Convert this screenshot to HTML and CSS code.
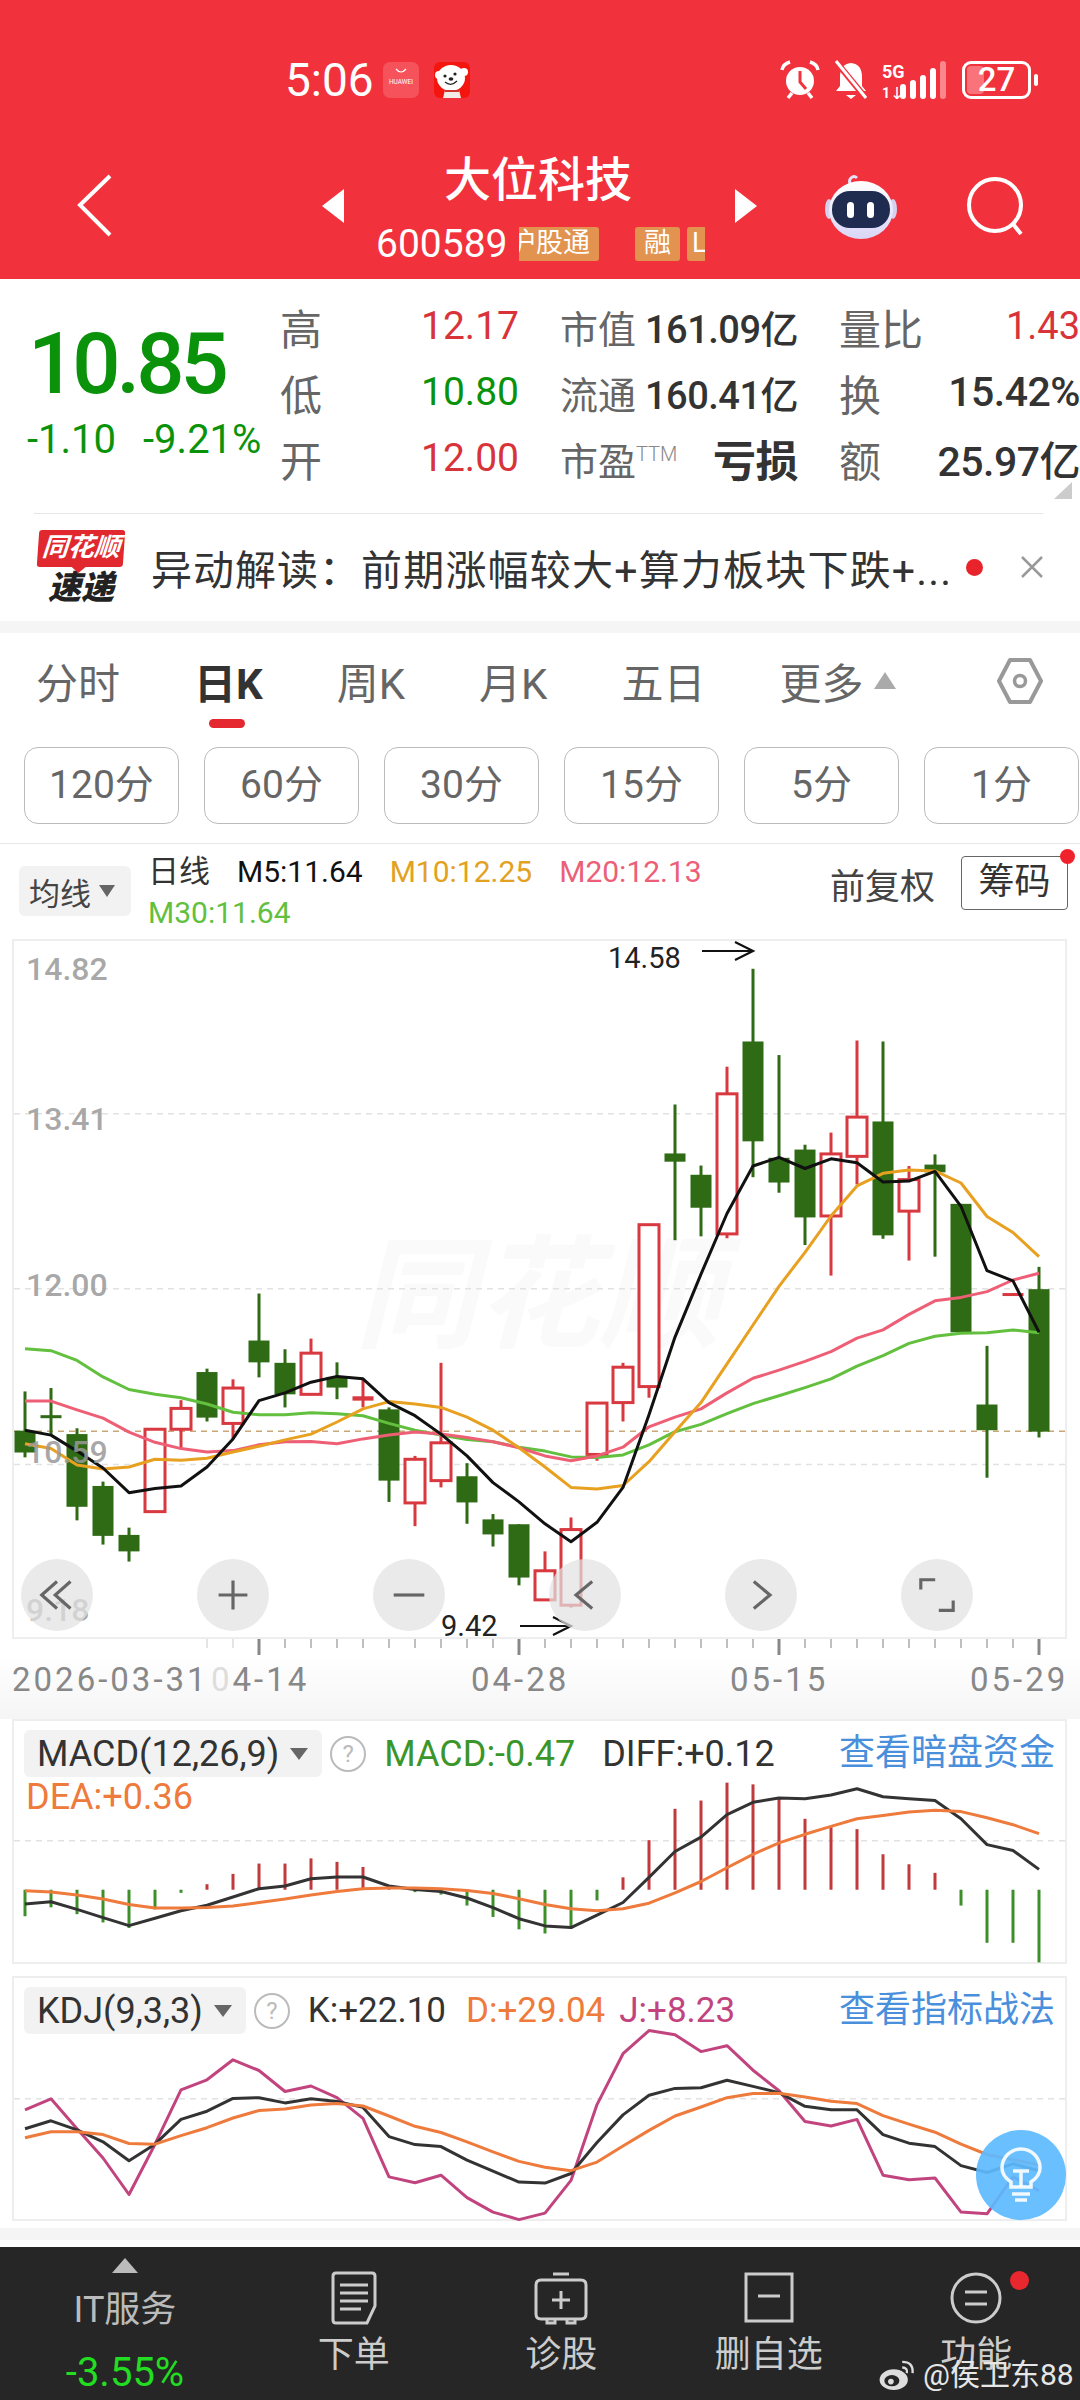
FILE: index.html
```html
<!DOCTYPE html>
<html lang="zh-CN">

<head>
    <meta charset="UTF-8">
    <title>大位科技</title>
    <link rel="stylesheet" href="styles.css">
</head>

<body>
    <header class="header">
        <div class="status">
            <span class="time">5:06</span>
            <svg class="app-huawei" viewBox="0 0 36 36">
                <rect width="36" height="36" rx="7" fill="#f5525b" />
                <path d="M13 7q5 6 10 0" fill="none" stroke="#fff" stroke-width="1.2" />
                <text x="18" y="22" class="huawei-text">HUAWEI</text>
            </svg>
            <svg class="app-bear" viewBox="0 0 36 36">
                <rect width="36" height="36" rx="6" fill="#f4150f" />
                <circle cx="5" cy="13" r="4" fill="#fff" />
                <circle cx="30" cy="10" r="4" fill="#fff" />
                <ellipse cx="17" cy="16" rx="14" ry="13" fill="#fff" />
                <path d="M11 28h14l2 8H9z" fill="#f3ece6" />
                <path d="M11 29h14" stroke="#d0342c" stroke-width="2" />
                <circle cx="11" cy="14" r="1.6" fill="#222" />
                <circle cx="21" cy="12" r="1.6" fill="#222" />
                <ellipse cx="17" cy="17" rx="2.4" ry="1.8" fill="#222" />
                <path d="M11 20q6 5 12 -1" fill="none" stroke="#222" stroke-width="1.2" />
            </svg>
            <div class="status-right">
                <svg class="st-alarm" viewBox="0 0 40 40">
                    <circle cx="20" cy="21" r="14" fill="#fff" />
                    <path d="M20 11v11l6 7" fill="none" stroke="#f1323c" stroke-width="3" />
                    <path d="M2 10q1-6 8-8M38 10q-1-6-8-8M8 38l4-5M32 38l-4-5" fill="none" stroke="#fff" stroke-width="3.5" />
                </svg>
                <svg class="st-bell" viewBox="0 0 36 40">
                    <path d="M18 3q11 1 11 14v9l4 5H3l4-5V17Q7 4 18 3z" fill="#fff" />
                    <path d="M13 35h10l-5 4z" fill="#fff" />
                    <path d="M4 3l28 34" stroke="#f1323c" stroke-width="6" />
                    <path d="M3 1l30 37" stroke="#fff" stroke-width="3" />
                </svg>
                <svg class="st-signal" viewBox="0 0 66 38">
                    <text x="1" y="17" class="net-text">5G</text>
                    <text x="1" y="37" class="net-small">1↓</text>
                    <path d="M22 35v-9M32 35v-13M42 35v-18M52 35v-25" stroke="#fff" stroke-width="6" stroke-linecap="round" />
                    <path d="M62 35V3" stroke="#f9878c" stroke-width="6" stroke-linecap="round" />
                </svg>
                <div class="battery">
                    <span class="battery-fill"></span>
                    <span class="battery-num">27</span>
                </div>
                <span class="battery-nub"></span>
            </div>
        </div>
        <nav class="nav">
            <svg class="back" viewBox="0 0 35 63">
                <path d="M33 2L3 31l30 30" fill="none" stroke="#fff" stroke-width="4" />
            </svg>
            <span class="arrow-left"></span>
            <div class="nav-mid">
                <div class="stock-name">大位科技</div>
                <div class="stock-code">
                    <span class="code">600589</span>
                    <span class="tag tag-hgt"><span>沪股通</span></span>
                    <span class="tag tag-rong">融</span>
                    <span class="tag tag-l">L</span>
                </div>
            </div>
            <span class="arrow-right"></span>
            <svg class="robot" viewBox="0 0 72 67">
                <defs>
                    <linearGradient id="helmet" x1="0" y1="0" x2="0" y2="1">
                        <stop offset="0" stop-color="#fff" />
                        <stop offset="1" stop-color="#d9d6f7" />
                    </linearGradient>
                </defs>
                <path d="M26 13q-3-4 0-7t6 0" fill="none" stroke="#e6e2fa" stroke-width="3" />
                <ellipse cx="4" cy="37" rx="4" ry="10" fill="#d5d2f0" />
                <ellipse cx="68" cy="37" rx="4" ry="10" fill="#d5d2f0" />
                <ellipse cx="36" cy="38" rx="32" ry="29" fill="url(#helmet)" />
                <rect x="7" y="19" width="58" height="37" rx="18" fill="#1f2c50" />
                <rect x="22" y="30" width="7" height="16" rx="3.5" fill="#fff" />
                <rect x="42" y="30" width="7" height="16" rx="3.5" fill="#fff" />
            </svg>
            <svg class="search" viewBox="0 0 60 58">
                <circle cx="28" cy="28" r="26" fill="none" stroke="#fff" stroke-width="4" />
                <path d="M46 47l8 10" stroke="#fff" stroke-width="4" />
            </svg>
        </nav>
    </header>

    <section class="quote">
        <div class="quote-left">
            <div class="price">10.85</div>
            <div class="change"><span>-1.10</span><span>-9.21%</span></div>
        </div>
        <div class="quote-grid">
            <div class="cell"><span class="label">高</span><span class="red">12.17</span></div>
            <div class="cell"><span class="label2">市值</span><span class="dark">161.09亿</span></div>
            <div class="cell"><span class="label">量比</span><span class="red small">1.43</span></div>
            <div class="cell"><span class="label">低</span><span class="green">10.80</span></div>
            <div class="cell"><span class="label2">流通</span><span class="dark">160.41亿</span></div>
            <div class="cell"><span class="label">换</span><span class="dark big">15.42%</span></div>
            <div class="cell"><span class="label">开</span><span class="red">12.00</span></div>
            <div class="cell"><span class="label2">市盈<sup class="ttm">TTM</sup></span><span class="dark bold">亏损</span></div>
            <div class="cell"><span class="label">额</span><span class="dark big">25.97亿</span></div>
        </div>
        <span class="corner"></span>
    </section>

    <section class="news">
        <div class="news-logo">
            <div class="logo-tag">同花顺</div>
            <div class="logo-sub">速递</div>
        </div>
        <div class="news-text">异动解读：<span class="news-body">前期涨幅较大+算力板块下跌+...</span></div>
        <span class="news-dot"></span>
        <svg class="news-close" viewBox="0 0 22 22">
            <path d="M1 1l20 20M21 1L1 21" stroke="#999" stroke-width="2.5" />
        </svg>
    </section>

    <div class="band"></div>

    <div class="tabs">
        <span class="tab">分时</span>
        <span class="tab active">日K</span>
        <span class="tab">周K</span>
        <span class="tab">月K</span>
        <span class="tab">五日</span>
        <span class="tab">更多</span>
        <span class="more-arrow"></span>
        <svg class="hex" viewBox="0 0 46 46">
            <path d="M13 2h20l11 21-11 21H13L2 23z" fill="none" stroke="#999" stroke-width="4" stroke-linejoin="round" />
            <circle cx="23" cy="23" r="5.5" fill="none" stroke="#999" stroke-width="3.5" />
        </svg>
    </div>

    <div class="periods">
        <span class="period">120分</span>
        <span class="period">60分</span>
        <span class="period">30分</span>
        <span class="period">15分</span>
        <span class="period">5分</span>
        <span class="period">1分</span>
    </div>

    <div class="legend">
        <div class="chip">均线<i class="caret"></i></div>
        <div class="series">
            <div class="series-row">
                <span class="series-name">日线</span>
                <span class="c-m5">M5:11.64</span>
                <span class="c-m10">M10:12.25</span>
                <span class="c-m20">M20:12.13</span>
            </div>
            <div class="series-row"><span class="c-m30">M30:11.64</span></div>
        </div>
        <div class="legend-right">
            <span class="fq">前复权</span>
            <span class="chouma">筹码<i class="chouma-dot"></i></span>
        </div>
    </div>

    <div class="panel panel-k">
        <svg id="kline" class="plot" viewBox="14 941 1051 696"></svg>
        <button class="cb cb1"><svg viewBox="0 0 40 40"><path d="M20 5L3 20l17 15M35 5L18 20l17 15" /></svg></button>
        <button class="cb cb2"><svg viewBox="0 0 40 40"><path d="M20 4v32M4 20h32" /></svg></button>
        <button class="cb cb3"><svg viewBox="0 0 40 40"><path d="M3 20h34" /></svg></button>
        <button class="cb cb4"><svg viewBox="0 0 40 40"><path d="M28 5L10 20l18 15" /></svg></button>
        <button class="cb cb5"><svg viewBox="0 0 40 40"><path d="M12 5l18 15-18 15" /></svg></button>
        <button class="cb cb6"><svg viewBox="0 0 40 40"><path d="M2 14V3h16M38 26v11H22" /></svg></button>
    </div>

    <div class="axis">
        <svg id="ticks" class="ticks" viewBox="0 0 1080 18"></svg>
        <div class="dates">
            <span class="d1">2026-03-31</span>
            <span class="d2"><b>0</b>4-14</span>
            <span class="d3">04-28</span>
            <span class="d4">05-15</span>
            <span class="d5">05-29</span>
        </div>
    </div>

    <div class="panel panel-sub">
        <svg id="macd" class="plot" viewBox="14 1721 1051 241"></svg>
        <div class="sub-head">
            <span class="chip2 chip-macd">MACD(12,26,9)<i class="caret"></i></span>
            <span class="help">?</span>
            <span class="v-green">MACD:-0.47</span>
            <span class="v-dark">DIFF:+0.12</span>
            <a class="sub-link">查看暗盘资金</a>
        </div>
        <div class="sub-line2">DEA:+0.36</div>
    </div>

    <div class="panel panel-sub panel-kdj">
        <svg id="kdj" class="plot" viewBox="14 1978 1051 241"></svg>
        <div class="sub-head">
            <span class="chip2">KDJ(9,3,3)<i class="caret"></i></span>
            <span class="help">?</span>
            <span class="v-dark">K:+22.10</span>
            <span class="v-orange">D:+29.04</span>
            <span class="v-pink">J:+8.23</span>
            <a class="sub-link">查看指标战法</a>
        </div>
        <div class="fab">
            <svg viewBox="0 0 44 56">
                <path d="M12 40v-5Q3 29 3 21a19 19 0 0 1 38 0q0 8-9 14v5z" fill="none" stroke="#fff" stroke-width="3.5" opacity=".9" />
                <path d="M13 47h18M16 53h12M14 24h16M22 24v16" fill="none" stroke="#fff" stroke-width="3.5" opacity=".9" />
            </svg>
        </div>
    </div>

    <div class="band2"></div>

    <footer class="footer">
        <div class="f-item f-sector">
            <span class="f-up"></span>
            <span class="f-sector-name">IT服务</span>
            <span class="f-sector-pct">-3.55%</span>
        </div>
        <div class="f-item">
            <svg class="f-icon" viewBox="0 0 56 54">
                <path d="M10 2h36q3 0 3 3v30l-8 17H10q-3 0-3-3V5q0-3 3-3z" />
                <path d="M14 14h28M14 22h28M14 30h28M14 38h21" />
            </svg>
            <span>下单</span>
        </div>
        <div class="f-item">
            <svg class="f-icon" viewBox="0 0 56 54">
                <path d="M20 3h16M8 9h40q5 0 5 5v29q0 5-5 5H8q-5 0-5-5V14q0-5 5-5zM14 48v4h8v-4M34 48v4h8v-4M28 20v18M19 29h18" />
            </svg>
            <span>诊股</span>
        </div>
        <div class="f-item">
            <svg class="f-icon" viewBox="0 0 56 54">
                <path d="M5 3h46v47H5zM17 25h22" />
            </svg>
            <span>删自选</span>
        </div>
        <div class="f-item f-func">
            <svg class="f-icon" viewBox="0 0 56 54">
                <ellipse cx="28" cy="27" rx="24" ry="24" />
                <path d="M17 21h22M17 33h22" />
            </svg>
            <i class="f-dot"></i>
            <span>功能</span>
        </div>
        <div class="weibo">
            <svg viewBox="0 0 40 34">
                <ellipse cx="16" cy="22" rx="15" ry="11" fill="#ddd" />
                <ellipse cx="14" cy="23" rx="8" ry="6" fill="#262626" />
                <circle cx="13" cy="24" r="3" fill="#ddd" />
                <path d="M25 3q12 0 11 12M25 9q6 0 5 6" fill="none" stroke="#ddd" stroke-width="2.5" />
            </svg>
            <span>@侯卫东88</span>
        </div>
    </footer>

    <script src="chart.js"></script>
</body>

</html>
```

FILE: styles.css
```css
* {
    margin: 0;
    padding: 0;
    box-sizing: border-box;
}

html,
body {
    width: 1080px;
    height: 2400px;
    overflow: hidden;
    background: #fff;
    font-family: Roboto, "Noto Sans CJK SC", sans-serif;
}

svg {
    display: block;
    flex-shrink: 0;
}

i {
    font-style: normal;
}

/* header */
.header {
    height: 279px;
    background: #f1323c;
    color: #fff;
    padding-top: 61px;
}

.status {
    display: flex;
    align-items: center;
    height: 38px;
    padding-left: 285px;
    margin-bottom: 41px;
}

.time {
    font-size: 46px;
    width: 85px;
    line-height: 38px;
}

.app-huawei {
    width: 36px;
    height: 36px;
    margin-left: 13px;
}

.huawei-text {
    font-size: 6.5px;
    fill: #fff;
    text-anchor: middle;
}

.app-bear {
    width: 36px;
    height: 36px;
    margin-left: 15px;
}

.status-right {
    display: flex;
    align-items: center;
    margin-left: auto;
    padding-right: 42px;
}

.st-alarm {
    width: 40px;
    height: 40px;
}

.st-bell {
    width: 36px;
    height: 40px;
    margin-left: 13px;
}

.st-signal {
    width: 66px;
    height: 38px;
    margin-left: 12px;
}

.net-text {
    font-size: 18px;
    font-weight: 700;
    fill: #fff;
}

.net-small {
    font-size: 14px;
    font-weight: 700;
    fill: #fff;
}

.battery {
    position: relative;
    width: 69px;
    height: 38px;
    margin-left: 15px;
    border: 3px solid #fff;
    border-radius: 9px;
}

.battery-fill {
    position: absolute;
    left: 2px;
    top: 2px;
    bottom: 2px;
    width: 17px;
    border-radius: 4px;
    background: #f8737a;
}

.battery-num {
    position: absolute;
    inset: 0;
    text-align: center;
    font-size: 33px;
    line-height: 32px;
    font-weight: 500;
}

.battery-nub {
    width: 4px;
    height: 12px;
    margin-left: 3px;
    border-radius: 2px;
    background: #fff;
}

.nav {
    display: flex;
    align-items: center;
    height: 131px;
    padding-left: 77px;
}

.back {
    width: 35px;
    height: 63px;
}

.arrow-left {
    width: 0;
    height: 0;
    margin-left: 210px;
    border-top: 17px solid transparent;
    border-bottom: 17px solid transparent;
    border-right: 22px solid #fff;
}

.arrow-right {
    width: 0;
    height: 0;
    border-top: 17px solid transparent;
    border-bottom: 17px solid transparent;
    border-left: 22px solid #fff;
}

.nav-mid {
    width: 391px;
    height: 111px;
}

.stock-name {
    height: 60px;
    line-height: 60px;
    font-size: 47px;
    font-weight: 500;
    text-align: center;
    margin-left: -3px;
}

.stock-code {
    display: flex;
    align-items: center;
    height: 34px;
    margin-top: 17px;
    padding-left: 32px;
}

.code {
    width: 130px;
    font-size: 39px;
}

.tag {
    display: flex;
    justify-content: center;
    height: 34px;
    line-height: 33px;
    font-size: 27px;
    background: #e2934f;
    border-radius: 3px;
    overflow: hidden;
    white-space: nowrap;
}

.tag-hgt {
    width: 80px;
    margin-left: 13px;
    justify-content: flex-end;
    padding-right: 9px;
    border-radius: 0 3px 3px 0;
}

.tag-hgt span {
    flex-shrink: 0;
}

.tag-rong {
    width: 45px;
    margin-left: 36px;
}

.tag-l {
    width: 18px;
    margin-left: 7px;
    justify-content: flex-start;
    padding-left: 5px;
    border-radius: 3px 0 0 3px;
}

.robot {
    width: 72px;
    height: 67px;
    margin-left: 68px;
}

.search {
    width: 60px;
    height: 58px;
    margin-left: 70px;
}

/* quote */
.quote {
    position: relative;
    display: flex;
    height: 234px;
}

.quote-left {
    width: 281px;
    padding-top: 40px;
}

.price {
    height: 90px;
    line-height: 90px;
    padding-left: 28px;
    font-size: 85px;
    font-weight: 500;
    letter-spacing: -4px;
    color: #0a930a;
}

.change {
    display: flex;
    gap: 27px;
    margin-top: 9px;
    padding-left: 27px;
    font-size: 40px;
    line-height: 44px;
    color: #0a930a;
}

.quote-grid {
    display: grid;
    grid-template-columns: 239px 238px 241px;
    grid-auto-rows: 66px;
    column-gap: 41px;
    margin-top: 14px;
}

.cell {
    display: flex;
    align-items: center;
    justify-content: space-between;
    font-size: 39px;
    white-space: nowrap;
}

.label {
    font-size: 42px;
    color: #666;
}

.label2 {
    font-size: 38px;
    color: #666;
}

.ttm {
    font-size: 20px;
    font-weight: 300;
    vertical-align: 14px;
    line-height: 0;
    color: #888;
}

.red {
    color: #d9333a;
}

.green {
    color: #0a930a;
}

.small {
    font-size: 38px;
}

.dark {
    font-size: 38px;
    color: #333;
    font-weight: 500;
    letter-spacing: -.5px;
}

.dark.big {
    font-size: 41px;
}

.dark.bold {
    font-size: 43px;
    font-weight: 700;
}

.corner {
    position: absolute;
    left: 1054px;
    top: 203px;
    border-bottom: 17px solid #ccc;
    border-left: 18px solid transparent;
}

/* news */
.news {
    display: flex;
    align-items: center;
    height: 108px;
    padding-left: 38px;
    position: relative;
}

.news::before {
    content: "";
    position: absolute;
    left: 34px;
    top: 0;
    width: 1009px;
    height: 1px;
    background: #e6e6e6;
}

.news-logo {
    width: 86px;
    height: 74px;
    text-align: center;
}

.logo-tag {
    position: relative;
    height: 37px;
    line-height: 34px;
    font-size: 26px;
    font-weight: 700;
    font-style: italic;
    color: #fff;
    background: #e0282e;
    border-radius: 3px;
    transform: skewX(-4deg);
    white-space: nowrap;
}

.logo-tag::after {
    content: "";
    position: absolute;
    left: 35px;
    bottom: -6px;
    border-top: 6px solid #e0282e;
    border-left: 7px solid transparent;
    border-right: 7px solid transparent;
}

.logo-sub {
    height: 37px;
    line-height: 42px;
    font-size: 33px;
    font-weight: 900;
    font-style: italic;
    color: #222;
}

.news-text {
    width: 799px;
    margin-left: 27px;
    font-size: 41px;
    letter-spacing: 1px;
    color: #333;
    white-space: nowrap;
}

.news-body {
    letter-spacing: 1.2px;
}

.news-dot {
    width: 17px;
    height: 17px;
    border-radius: 50%;
    background: #e8232b;
    margin-left: 16px;
    flex-shrink: 0;
}

.news-close {
    width: 22px;
    height: 22px;
    margin-left: 38px;
}

.band {
    height: 12px;
    background: #f5f5f5;
}

/* tabs */
.tabs {
    position: relative;
    display: flex;
    align-items: center;
    gap: 74px;
    height: 114px;
    padding: 0 0 19px 36px;
}

.tab {
    position: relative;
    font-size: 42px;
    color: #666;
    white-space: nowrap;
}

.tab.active {
    color: #333;
    font-weight: 700;
}

.tab.active::after {
    content: "";
    position: absolute;
    left: 15px;
    bottom: -17px;
    width: 36px;
    height: 9px;
    border-radius: 5px;
    background: #e5282f;
}

.more-arrow {
    margin-left: -63px;
    border-bottom: 17px solid #aaa;
    border-left: 11px solid transparent;
    border-right: 11px solid transparent;
}

.hex {
    width: 46px;
    height: 46px;
    position: absolute;
    left: 997px;
    top: 25px;
}

.periods {
    display: flex;
    gap: 25px;
    padding-left: 24px;
}

.period {
    width: 155px;
    height: 77px;
    flex-shrink: 0;
    border: 1.5px solid #bbb;
    border-radius: 14px;
    font-size: 39px;
    line-height: 74px;
    text-align: center;
    color: #666;
}

/* legend */
.legend {
    display: flex;
    align-items: flex-start;
    height: 96px;
    margin-top: 19px;
    padding-left: 19px;
    border-top: 1.5px solid #e8e8e8;
}

.chip {
    display: flex;
    align-items: center;
    width: 112px;
    height: 50px;
    margin-top: 22px;
    padding-left: 10px;
    border-radius: 6px;
    background: #f2f2f2;
    font-size: 31px;
    color: #444;
}

.caret {
    display: inline-block;
    border-top: 12px solid #666;
    border-left: 8px solid transparent;
    border-right: 8px solid transparent;
}

.chip .caret {
    margin-left: 8px;
}

.series {
    margin-left: 17px;
    margin-top: 7px;
    font-size: 30px;
    line-height: 41px;
}

.series-row {
    display: flex;
    gap: 27px;
    white-space: nowrap;
}

.series-name {
    font-size: 31px;
    color: #333;
}

.c-m5 {
    color: #111;
}

.c-m10 {
    color: #e3a122;
}

.c-m20 {
    color: #ec5f78;
}

.c-m30 {
    color: #62c03e;
}

.legend-right {
    display: flex;
    align-items: center;
    gap: 26px;
    margin-left: auto;
    margin-top: 12px;
    padding-right: 12px;
}

.fq {
    font-size: 35px;
    color: #444;
}

.chouma {
    position: relative;
    width: 107px;
    height: 54px;
    border: 1.5px solid #666;
    border-radius: 4px;
    font-size: 36px;
    line-height: 50px;
    text-align: center;
    color: #333;
}

.chouma-dot {
    position: absolute;
    right: -8px;
    top: -8px;
    width: 15px;
    height: 15px;
    border-radius: 50%;
    background: #f0232c;
}

/* chart panels */
.panel {
    position: relative;
    width: 1055px;
    margin-left: 12px;
    border: 2px solid #eee;
}

.panel-k {
    height: 700px;
}

.panel-sub {
    height: 245px;
}

.panel-kdj {
    margin-top: 12px;
}

.plot {
    position: absolute;
    left: 0;
    top: 0;
    width: 1051px;
    height: 100%;
    overflow: visible;
}

.price-label {
    font-size: 32px;
    font-weight: 500;
    fill: #999;
    fill-opacity: .85;
}

.mark-label {
    font-size: 29px;
    fill: #222;
}

.watermark {
    font-size: 122px;
    font-weight: 700;
    font-style: italic;
    fill: #fafafa;
}

.cb {
    position: absolute;
    top: 618px;
    width: 72px;
    height: 72px;
    border: 0;
    border-radius: 50%;
    background: rgba(226, 226, 226, .72);
    display: flex;
    align-items: center;
    justify-content: center;
}

.cb svg {
    width: 36px;
    height: 36px;
    fill: none;
    stroke: #666;
    stroke-width: 3.5;
}

.cb1 {
    left: 7px;
}

.cb2 {
    left: 183px;
}

.cb3 {
    left: 359px;
}

.cb4 {
    left: 535px;
}

.cb5 {
    left: 711px;
}

.cb6 {
    left: 887px;
}

.axis {
    height: 80px;
    background: linear-gradient(#fff 20%, #f5f5f5);
}

.ticks {
    width: 1080px;
    height: 18px;
}

.dates {
    position: relative;
    height: 44px;
    margin-top: 1px;
    font-size: 33px;
    letter-spacing: 3px;
    line-height: 44px;
    color: #888;
    white-space: nowrap;
}

.dates span {
    position: absolute;
    top: 0;
}

.dates b {
    font-weight: 400;
    color: #ddd;
}

.d1 {
    left: 12px;
}

.d2 {
    left: 211px;
}

.d3 {
    left: 471px;
}

.d4 {
    left: 730px;
}

.d5 {
    left: 970px;
}

.sub-head {
    position: relative;
    display: flex;
    align-items: center;
    height: 47px;
    margin-top: 9px;
    padding-left: 10px;
    font-size: 36px;
    white-space: nowrap;
}

.panel-kdj .sub-head {
    font-size: 35px;
}

.chip2 {
    display: flex;
    align-items: center;
    height: 47px;
    padding: 0 14px 0 13px;
    border-radius: 6px;
    background: #f2f2f2;
    color: #333;
    font-size: 36px;
}

.chip2 .caret {
    margin-left: 11px;
    border-top-width: 12px;
    border-left-width: 9px;
    border-right-width: 9px;
}

.help {
    width: 36px;
    height: 36px;
    margin: 0 18px 0 8px;
    border: 2px solid #bbb;
    border-radius: 50%;
    font-size: 24px;
    line-height: 32px;
    text-align: center;
    color: #bbb;
    flex-shrink: 0;
}

.v-green {
    color: #3a962a;
    margin-right: 27px;
}

.v-dark {
    color: #333;
    margin-right: 20px;
}

.v-orange {
    color: #ee7a3c;
    margin-right: 14px;
}

.v-pink {
    color: #c2447f;
}

.sub-link {
    position: absolute;
    left: 825px;
    top: 0;
    font-size: 36px;
    line-height: 47px;
    color: #4a8fdc;
}

.sub-line2 {
    position: relative;
    padding-left: 12px;
    font-size: 36px;
    line-height: 40px;
    color: #ee7a3c;
}

.fab {
    position: absolute;
    left: 962px;
    top: 152px;
    width: 90px;
    height: 90px;
    border-radius: 50%;
    background: rgba(93, 186, 255, .92);
    display: flex;
    align-items: center;
    justify-content: center;
}

.fab svg {
    width: 44px;
    height: 56px;
}

.band2 {
    height: 12px;
    margin-top: 7px;
    background: #f5f5f5;
}

/* footer */
.footer {
    position: relative;
    display: grid;
    grid-template-columns: 250px repeat(4, 1fr);
    height: 153px;
    margin-top: 7px;
    background: #262626;
    color: #ccc;
}

.f-item {
    position: relative;
    display: flex;
    flex-direction: column;
    align-items: center;
    padding-top: 24px;
    font-size: 36px;
    line-height: 44px;
}

.f-icon {
    width: 56px;
    height: 54px;
    margin-bottom: 8px;
    fill: none;
    stroke: #ccc;
    stroke-width: 3;
}

.f-sector {
    padding-top: 11px;
}

.f-up {
    border-bottom: 15px solid #bbb;
    border-left: 13px solid transparent;
    border-right: 13px solid transparent;
}

.f-sector-name {
    margin-top: 15px;
    color: #bbb;
}

.f-sector-pct {
    margin-top: 19px;
    font-size: 40px;
    color: #22dd22;
}

.f-dot {
    position: absolute;
    left: 137px;
    top: 24px;
    width: 19px;
    height: 19px;
    border-radius: 50%;
    background: #e8282e;
}

.weibo {
    position: absolute;
    left: 878px;
    top: 108px;
    display: flex;
    align-items: center;
    gap: 6px;
    font-size: 30px;
    line-height: 40px;
    color: #e6e6e6;
    white-space: nowrap;
}

.weibo svg {
    width: 39px;
    height: 32px;
}
```

FILE: chart.js
```js
// 数据按截图量出来的坐标记录，这里换算成页面像素
const X = (i) => 25 + 26 * i
const ky = (z) => 930 + z * 0.4847
const sy = (z) => 1700 + z / 2.904

const NS = 'http://www.w3.org/2000/svg'
const add = (svg, name, attrs, text) => {
    const node = document.createElementNS(NS, name)
    Object.keys(attrs).forEach(k => node.setAttribute(k, attrs[k]))
    if (text) node.textContent = text
    svg.appendChild(node)
    return node
}

const line = (svg, data, conv, color, width = 2.6) => {
    const points = data.map((z, i) => X(i) + ',' + conv(z).toFixed(1)).join(' ')
    add(svg, 'polyline', { points, fill: 'none', stroke: color, 'stroke-width': width, 'stroke-linejoin': 'round' })
}

const grid = (svg, y, color = '#e2e2e2') => {
    add(svg, 'path', { d: `M14 ${y}H1065`, stroke: color, 'stroke-width': 1.5, 'stroke-dasharray': '6 5' })
}

// [涨跌, 上影, 下影, 实体上, 实体下]
const candles = [
    ['g', 952, 1088, 1033, 1078], ['g', 945, 1040, 1001, 1006], ['g', 1028, 1218, 1040, 1190], ['g', 1138, 1268, 1147, 1250],
    ['g', 1233, 1303, 1248, 1282], ['r', 1030, 1200, 1030, 1200], ['r', 970, 1070, 987, 1030], ['g', 905, 1014, 912, 1006],
    ['r', 927, 1050, 945, 1018], ['g', 750, 923, 847, 892], ['g', 865, 985, 893, 958], ['r', 843, 960, 873, 958],
    ['g', 892, 968, 922, 944], ['s', 927, 985, 962, 971], ['g', 985, 1180, 989, 1136], ['r', 1085, 1230, 1092, 1182],
    ['r', 893, 1150, 1058, 1136], ['g', 1100, 1225, 1127, 1181], ['g', 1205, 1272, 1216, 1247], ['g', 1226, 1352, 1226, 1336],
    ['r', 1282, 1382, 1322, 1382], ['r', 1212, 1398, 1237, 1393], ['r', 976, 1095, 976, 1082], ['r', 893, 1014, 902, 975],
    ['r', 608, 965, 608, 942], ['g', 360, 640, 461, 478], ['g', 486, 632, 505, 573], ['r', 282, 636, 338, 627],
    ['g', 80, 510, 230, 436], ['g', 258, 542, 470, 521], ['g', 443, 650, 453, 593], ['r', 418, 713, 462, 590],
    ['r', 228, 525, 386, 467], ['g', 230, 637, 395, 630], ['r', 487, 682, 515, 580], ['g', 463, 674, 484, 500],
    ['g', 565, 830, 565, 830], ['g', 858, 1130, 979, 1032], ['s', 749, 755, 749, 755], ['g', 695, 1047, 741, 1035],
]

const m5 = [1032, 1042, 1075, 1110, 1161, 1152, 1147, 1108, 1050, 971, 955, 933, 921, 926, 975, 1002, 1040, 1085, 1140, 1180, 1225, 1262, 1222, 1150, 1000, 840, 710, 585, 487, 469, 492, 472, 480, 520, 518, 498, 570, 703, 724, 830]
const m10 = [1060, 1070, 1104, 1112, 1108, 1092, 1094, 1090, 1077, 1065, 1052, 1040, 1015, 988, 973, 978, 985, 1005, 1032, 1068, 1108, 1150, 1153, 1146, 1097, 1035, 975, 895, 815, 735, 665, 590, 528, 502, 495, 497, 522, 591, 624, 674]
const m20 = [972, 972, 990, 1007, 1036, 1057, 1070, 1077, 1074, 1062, 1056, 1055, 1060, 1050, 1042, 1036, 1040, 1047, 1056, 1068, 1085, 1095, 1085, 1067, 1025, 1005, 988, 955, 925, 908, 890, 870, 842, 825, 793, 765, 758, 746, 722, 708]
const m30 = [864, 868, 888, 922, 948, 958, 965, 978, 995, 1000, 1000, 996, 998, 1002, 1018, 1032, 1042, 1051, 1056, 1067, 1075, 1087, 1088, 1083, 1062, 1035, 1020, 998, 977, 961, 944, 926, 900, 878, 853, 838, 832, 831, 825, 831]

const kline = document.querySelector('#kline')
const GREEN = '#2f6a14'
const RED = '#d8383f'

add(kline, 'text', { x: 355, y: 1338, class: 'watermark' }, '同花顺')
;[1113.7, 1288.7, 1464.6].forEach(y => grid(kline, y))
grid(kline, 1431.2, '#c9a877')

candles.forEach(([type, hi, lo, top, bottom], i) => {
    const x = X(i)
    const color = type === 'g' ? GREEN : RED
    add(kline, 'path', { d: `M${x} ${ky(hi)}V${ky(lo)}`, stroke: color, 'stroke-width': 3 })
    if (type === 'r') {
        add(kline, 'rect', { x: x - 10, y: ky(top), width: 20, height: ky(bottom) - ky(top), fill: '#fff', stroke: color, 'stroke-width': 3 })
    } else {
        add(kline, 'rect', { x: x - 10.5, y: ky(top), width: 21, height: Math.max(ky(bottom) - ky(top), 3), fill: color })
    }
})

line(kline, m30, ky, '#62c03e', 3)
line(kline, m20, ky, '#ee5f76', 3)
line(kline, m10, ky, '#e8a020', 3)
line(kline, m5, ky, '#111', 3)

;[[968, '14.82'], [1118, '13.41'], [1284, '12.00'], [1451, '10.59'], [1609, '9.18']].forEach(([y, t]) => {
    add(kline, 'text', { x: 26, y: y + 12, class: 'price-label' }, t)
})

add(kline, 'text', { x: 608, y: 968, class: 'mark-label' }, '14.58')
add(kline, 'path', { d: 'M702 951H752M735 942l18 9-18 9', fill: 'none', stroke: '#111', 'stroke-width': 2.2 })
add(kline, 'text', { x: 441, y: 1636, class: 'mark-label' }, '9.42')
add(kline, 'path', { d: 'M520 1626H570M553 1617l18 9-18 9', fill: 'none', stroke: '#111', 'stroke-width': 2.2 })

// 时间轴刻度
const ticks = document.querySelector('#ticks')
for (let i = 7; i < 40; i++) {
    const major = (i - 9) % 10 === 0
    const faint = i < 9 ? '#ddd' : '#aaa'
    add(ticks, 'path', { d: `M${X(i)} 0V${major ? 16 : 9}`, stroke: major ? '#888' : faint, 'stroke-width': major ? 3 : 1.5 })
}

// MACD
const macd = document.querySelector('#macd')
const bars = [628, 602, 622, 646, 662, 608, 560, 535, 505, 475, 475, 460, 470, 485, 549, 558, 565, 597, 630, 666, 678, 664, 582, 515, 407, 316, 292, 240, 245, 285, 345, 368, 375, 448, 477, 502, 597, 705, 705, 762]
const diff = [592, 586, 608, 632, 655, 634, 612, 596, 572, 548, 540, 519, 514, 514, 540, 550, 556, 575, 603, 635, 656, 661, 625, 588, 515, 440, 398, 333, 297, 285, 287, 276, 258, 281, 287, 292, 345, 420, 437, 492]
const dea = [554, 558, 566, 578, 594, 604, 604, 603, 598, 588, 578, 566, 556, 548, 546, 546, 548, 553, 562, 577, 594, 606, 612, 606, 590, 560, 527, 487, 448, 415, 390, 367, 345, 335, 325, 320, 324, 342, 362, 388]

grid(macd, sy(409))
bars.forEach((z, i) => {
    add(macd, 'path', { d: `M${X(i)} ${sy(551)}V${sy(z)}`, stroke: z > 551 ? '#3d8f2a' : '#c0393b', 'stroke-width': 3 })
})
line(macd, diff, sy, '#333', 3)
line(macd, dea, sy, '#ee7a3c', 3)

// KDJ
const kdj = document.querySelector('#kdj')
const kk = [1245, 1222, 1248, 1283, 1338, 1290, 1218, 1194, 1157, 1155, 1170, 1158, 1166, 1183, 1268, 1291, 1297, 1336, 1368, 1400, 1403, 1375, 1285, 1205, 1148, 1128, 1126, 1104, 1122, 1140, 1180, 1190, 1190, 1262, 1287, 1297, 1352, 1372, 1347, 1367]
const dd = [1271, 1254, 1254, 1262, 1288, 1290, 1265, 1242, 1214, 1192, 1188, 1176, 1172, 1179, 1208, 1238, 1256, 1283, 1312, 1340, 1357, 1367, 1342, 1295, 1250, 1208, 1182, 1155, 1143, 1142, 1153, 1165, 1172, 1207, 1232, 1255, 1290, 1320, 1335, 1350]
const jj = [1190, 1158, 1245, 1330, 1436, 1290, 1132, 1103, 1045, 1076, 1137, 1121, 1155, 1215, 1385, 1402, 1380, 1445, 1487, 1509, 1490, 1395, 1175, 1027, 960, 972, 1021, 1004, 1075, 1135, 1224, 1237, 1218, 1380, 1393, 1388, 1487, 1492, 1385, 1425]

grid(kdj, sy(1158))
line(kdj, jj, sy, '#c2447f', 3)
line(kdj, kk, sy, '#333', 3)
line(kdj, dd, sy, '#ee7a3c', 3)
```
